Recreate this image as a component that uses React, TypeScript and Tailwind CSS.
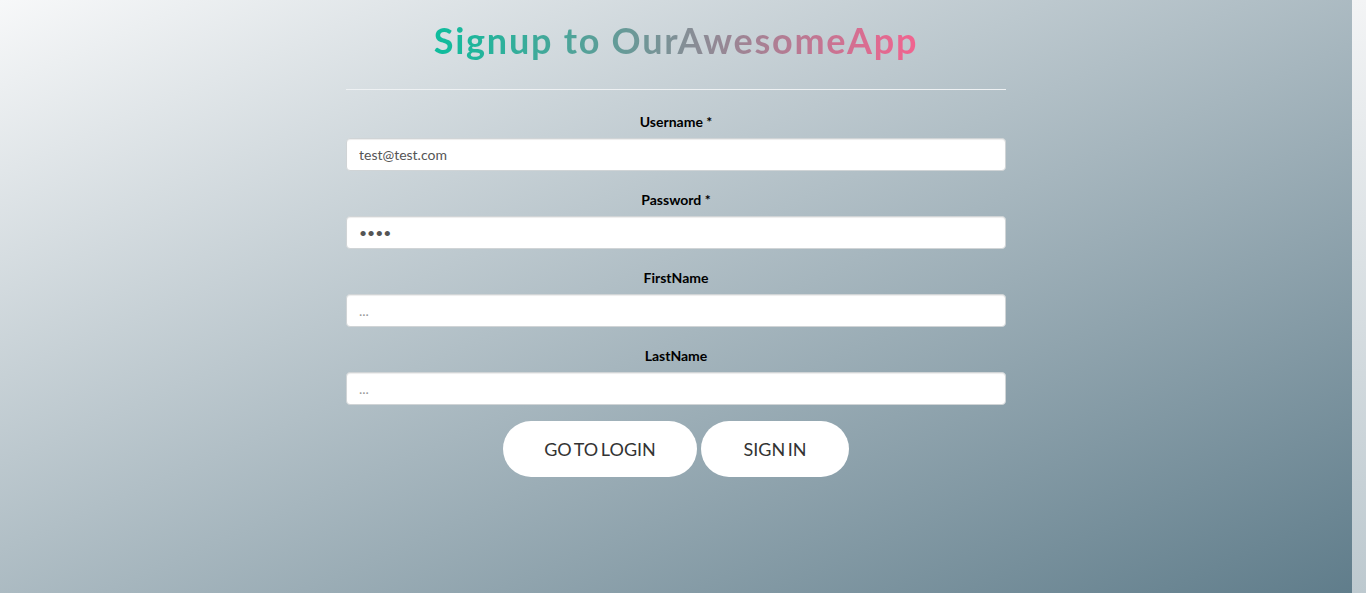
import React from "react";

const Field = ({ label, type, value, placeholder }: { label: string; type: string; value?: string; placeholder?: string }) => (
  <div className="flex flex-col mb-[19px]">
    <label className="text-center text-[14px] leading-[20px] font-bold text-black mb-[6px]">{label}</label>
    <input
      type={type}
      defaultValue={value}
      placeholder={placeholder}
      className="h-[33px] w-full rounded-[4px] border border-[#d0d4d6] bg-white px-[12px] text-[14px] text-[#555] placeholder:text-[#999] outline-none shadow-[inset_0_1px_1px_rgba(0,0,0,0.075)]"
      style={{ fontFamily: "Lato, sans-serif" }}
    />
  </div>
);

export default function App() {
  return (
    <div className="flex h-[593px] w-full overflow-hidden" style={{ fontFamily: "Lato, 'Open Sans', sans-serif" }}>
      <div className="flex-1 bg-[linear-gradient(to_bottom_right,#f7f8f9,#607d8b)]">
        <div className="mx-auto w-[660px] pt-[20px]">
          <h1 className="text-center text-[36px] leading-[40px] font-bold tracking-[1.75px]">
            <span className="bg-[linear-gradient(to_right,#0dbd9d,#f2638f)] bg-clip-text text-transparent">Signup to OurAwesomeApp</span>
          </h1>
          <hr className="mt-[29px] mb-[22px] border-0 border-t border-[#eef1f3]" />
          <form onSubmit={(e) => e.preventDefault()}>
            <Field label="Username *" type="text" value="test@test.com" />
            <Field label="Password *" type="password" value="test" />
            <Field label="FirstName" type="text" placeholder="..." />
            <Field label="LastName" type="text" placeholder="..." />
            <div className="-mt-[3px] flex justify-center gap-[4px]">
              <button type="button" className="h-[56px] w-[194px] rounded-full bg-white text-[18px] text-[#333] uppercase [word-spacing:-2px]">Go to login</button>
              <button type="button" className="h-[56px] w-[148px] rounded-full bg-white text-[18px] text-[#333] uppercase [word-spacing:-2px]">Sign in</button>
            </div>
          </form>
        </div>
      </div>
      <div className="w-[14px] bg-[linear-gradient(to_bottom,#f3f4f5,#bdc9cf)]" />
    </div>
  );
}
